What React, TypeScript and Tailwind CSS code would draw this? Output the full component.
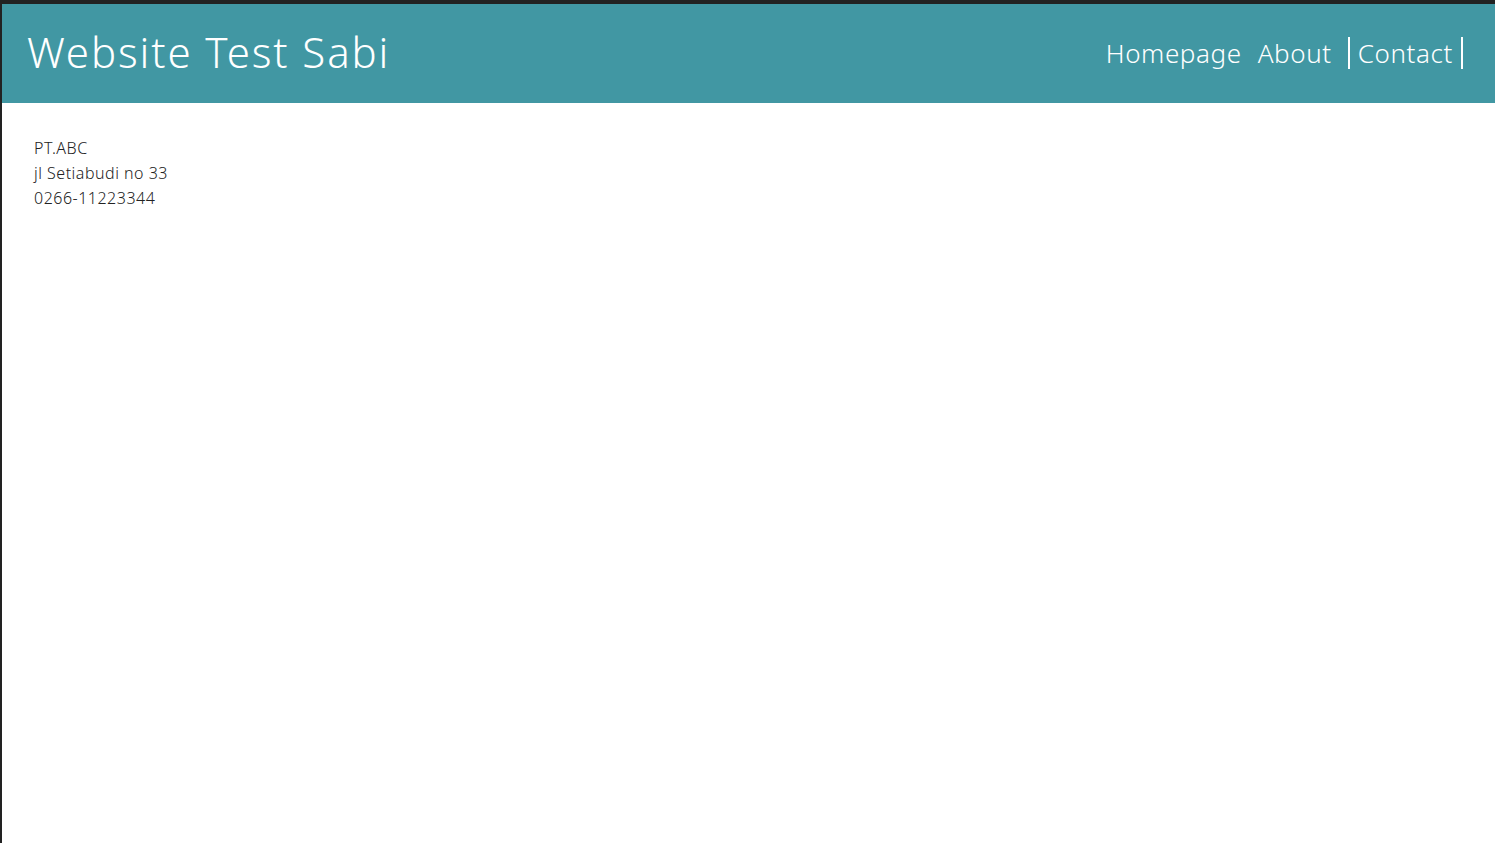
export default function App() {
  return (
    <div
      className="min-h-[843px] border-t-4 border-l-2 border-[#222222] bg-white"
      style={{ fontFamily: '"Noto Sans", "Open Sans", sans-serif' }}
    >
      <header className="flex h-[99px] items-center justify-between bg-[#4197a3] pl-[25px] pr-[32px] text-white">
        <h1 className="pb-[4px] text-[42px] font-light leading-none tracking-[1.9px]">Website Test Sabi</h1>
        <nav className="flex items-center gap-[16px] pb-[1px] text-[26px] font-light leading-none tracking-[0.6px]">
          <a className="py-[3px]">Homepage</a>
          <a className="py-[3px]">About</a>
          <a className="flex h-[32px] items-center border-x-2 border-white px-[8px]">Contact</a>
        </nav>
      </header>
      <main className="px-8 pt-[33px] text-[16px] font-light leading-[25px] tracking-[0.5px] text-[#222]">
        <p>PT.ABC</p>
        <p>jl Setiabudi no 33</p>
        <p>0266-11223344</p>
      </main>
    </div>
  );
}
